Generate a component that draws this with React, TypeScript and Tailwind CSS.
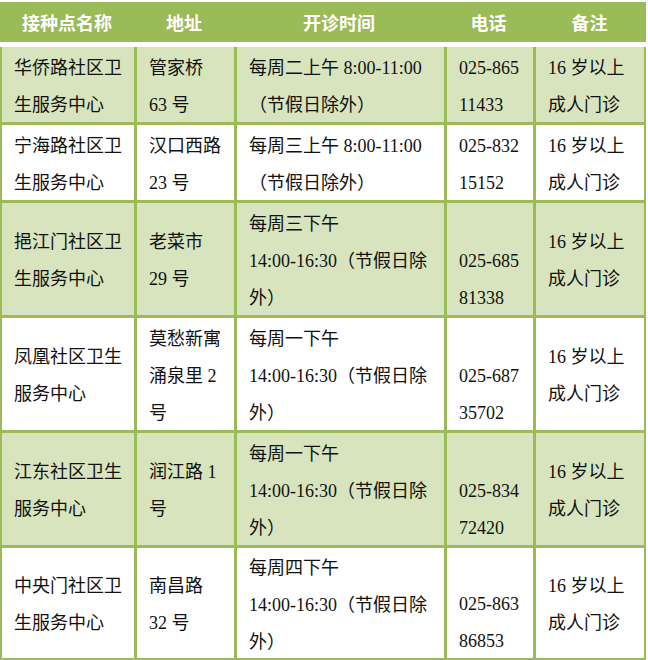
import React from "react";

// 每行：是否浅绿底 + 五列的分行文字
type Row = { shade: boolean; cells: string[][] };

const headers = ["接种点名称", "地址", "开诊时间", "电话", "备注"];

const note = ["16 岁以上", "成人门诊"];
const pm = (day: string) => [`每周${day}下午`, "14:00-16:30（节假日除", "外）"];

const rows: Row[] = [
  {
    shade: true,
    cells: [["华侨路社区卫", "生服务中心"], ["管家桥", "63 号"], ["每周二上午 8:00-11:00", "（节假日除外）"], ["025-865", "11433"], note],
  },
  {
    shade: false,
    cells: [["宁海路社区卫", "生服务中心"], ["汉口西路", "23 号"], ["每周三上午 8:00-11:00", "（节假日除外）"], ["025-832", "15152"], note],
  },
  {
    shade: true,
    cells: [["挹江门社区卫", "生服务中心"], ["老菜市", "29 号"], pm("三"), ["", "025-685", "81338"], note],
  },
  {
    shade: false,
    cells: [["凤凰社区卫生", "服务中心"], ["莫愁新寓", "涌泉里 2", "号"], pm("一"), ["", "025-687", "35702"], note],
  },
  {
    shade: true,
    cells: [["江东社区卫生", "服务中心"], ["润江路 1", "号"], pm("一"), ["", "025-834", "72420"], note],
  },
  {
    shade: false,
    cells: [["中央门社区卫", "生服务中心"], ["南昌路", "32 号"], pm("四"), ["", "025-863", "86853"], note],
  },
];

// 把一行拆成 ASCII 段和中文段，半角字换成衬线体（宋体的半角字宽约 0.5em）
function Line({ text }: { text: string }) {
  if (!text) return <div className="h-[37px]" />;
  const parts = text.split(/([\x20-\x7e]+)/).filter(Boolean);
  return (
    <div className="h-[37px] whitespace-nowrap">
      {parts.map((p, i) =>
        /^[\x20-\x7e]+$/.test(p) ? (
          <span key={i} className="font-['Liberation_Serif','Noto_Sans_CJK_SC',serif] text-[18px] whitespace-pre">
            {p}
          </span>
        ) : (
          <span key={i}>{p}</span>
        )
      )}
    </div>
  );
}

export default function App() {
  return (
    <div className="w-[648px] h-[660px] bg-white overflow-hidden font-['Noto_Sans_CJK_SC',sans-serif] text-[18px] leading-[37px] text-[#111]">
      <div className="w-[646px] pt-[2px]">
        {/* 表头 */}
        <div className="grid grid-cols-[134px_100px_210px_89px_113px] h-[40px] bg-[#9bbb59] text-white font-bold">
          {headers.map((h) => (
            <div key={h} className="flex items-center justify-center">
              {h}
            </div>
          ))}
        </div>

        <div className="h-[5px]" />

        {/* 表体 */}
        <div className="grid grid-cols-[132px_97px_207px_86px_108px] grid-rows-[75px_75px_112px_112px_112px_110px] gap-[3px] bg-[#9bbb59] px-[2px] pb-[2px]">
          {rows.map((row, r) =>
            row.cells.map((lines, c) => (
              <div
                key={`${r}-${c}`}
                className={`flex flex-col justify-center pl-[12px] ${row.shade ? "bg-[#d7e4bd]" : "bg-white"}`}
              >
                {lines.map((t, i) => (
                  <Line key={i} text={t} />
                ))}
              </div>
            ))
          )}
        </div>
      </div>
    </div>
  );
}
